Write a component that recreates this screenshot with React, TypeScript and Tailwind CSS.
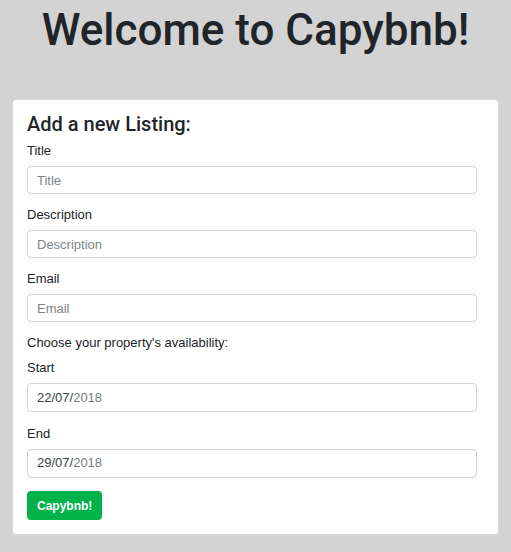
export default function App() {
  const fields = [
    { label: 'Title', placeholder: 'Title' },
    { label: 'Description', placeholder: 'Description' },
    { label: 'Email', placeholder: 'Email' },
  ]

  const dates = [
    { label: 'Start', day: '22/07/', year: '2018' },
    { label: 'End', day: '29/07/', year: '2018' },
  ]

  return (
    <div className="min-h-screen bg-[#d3d3d3] pt-[4px] pb-[17px] font-['Liberation_Sans',Arial,sans-serif] text-[#212529]">
      <h1 className="text-center font-['Roboto',Arial,sans-serif] text-[44px] font-medium leading-[52px]">
        Welcome to Capybnb!
      </h1>

      <div className="mx-3 mt-[43px] rounded-[4px] border border-[#d9d9d9] bg-white pl-[14px] pr-[21px] pt-[12px] pb-[14px]">
        <h2 className="font-['Roboto',Arial,sans-serif] text-[20px] font-medium leading-[24px]">Add a new Listing:</h2>

        <form className="mt-[4px]" onSubmit={(e) => e.preventDefault()}>
          {fields.map((f) => (
            <div key={f.label} className="mb-[10px]">
              <label className="mb-[5px] block text-[13px] leading-[21px]">{f.label}</label>
              <input
                type="text"
                placeholder={f.placeholder}
                className="block h-[28px] w-full rounded-[4px] border border-[#ced4da] px-[9px] text-[13px] text-[#495057] outline-none placeholder:text-[#7d8389]"
              />
            </div>
          ))}

          <p className="mb-[4px] text-[13px] leading-[21px]">Choose your property's availability:</p>

          {dates.map((d) => (
            <div key={d.label} className="mb-[10.5px]">
              <label className="mb-[5px] block text-[13px] leading-[21px]">{d.label}</label>
              <div className="flex h-[29px] w-full items-center rounded-[4px] border border-[#ced4da] px-[9px] text-[13px]">
                <span className="text-[#3a3f44]">{d.day}</span>
                <span className="text-[#767b80]">{d.year}</span>
              </div>
            </div>
          ))}

          <button
            type="submit"
            className="mt-[3px] h-[29px] rounded-[4px] bg-[#00b24a] px-[10px] text-[12px] font-bold text-white"
          >
            Capybnb!
          </button>
        </form>
      </div>
    </div>
  )
}
